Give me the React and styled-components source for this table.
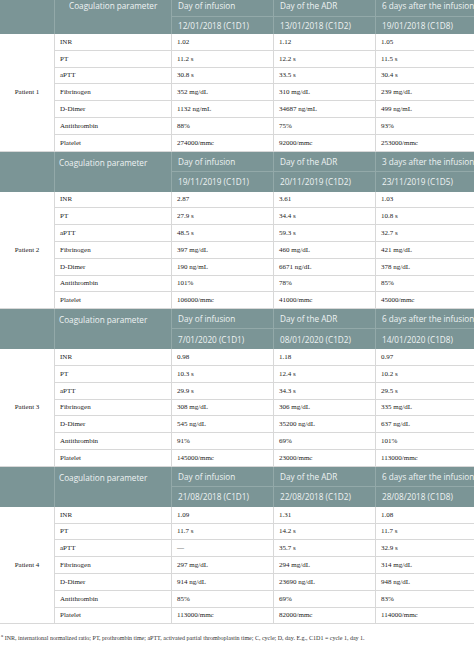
import React from "react";
import styled, { createGlobalStyle } from "styled-components";

const GlobalStyle = createGlobalStyle`
  html, body {
    margin: 0;
    padding: 0;
    background: #ffffff;
    overflow: hidden;
  }
`;

const Page = styled.div`
  width: 478px;
`;

const Block = styled.div`
  display: grid;
  grid-template-columns: 55px 117px 102px 102px 102px;
  grid-template-rows: ${({ $first }) => ($first ? "17px 17px" : "20px 20px")} repeat(7, 16.8px);
`;

const HeadCell = styled.div`
  box-sizing: border-box;
  background: #7b9596;
  color: #eef3f3;
  font-family: "Open Sans", "Liberation Sans", sans-serif;
  font-size: 8.2px;
  line-height: 11px;
  white-space: nowrap;
  overflow: hidden;
  display: flex;
  align-items: ${({ $first }) => ($first ? "flex-start" : "center")};
  padding-left: 6px;
  border-right: 1px solid #93a9a9;
  border-bottom: ${({ $top }) => ($top ? "1px solid #93a9a9" : "none")};
`;

const Corner = styled(HeadCell)`
  grid-row: span 2;
`;

const ParamHead = styled(HeadCell)`
  grid-row: span 2;
  align-items: flex-start;
  padding-top: ${({ $first }) => ($first ? 0 : 5)}px;
  padding-left: ${({ $indent }) => $indent}px;
`;

const Cell = styled.div`
  box-sizing: border-box;
  font-family: "Liberation Serif", "Times New Roman", serif;
  font-size: 7px;
  color: #222222;
  white-space: nowrap;
  display: flex;
  align-items: center;
  padding-left: 5px;
  border-right: 1px solid #d8d8d8;
  border-bottom: 1px solid #d8d8d8;
`;

const PatientCell = styled(Cell)`
  grid-row: span 7;
  justify-content: center;
  padding-left: 0;
`;

const Footnote = styled.p`
  margin: 9px 0 0 1px;
  font-family: "Liberation Serif", "Times New Roman", serif;
  font-size: 6px;
  color: #333333;
  white-space: nowrap;
`;

const params = ["INR", "PT", "aPTT", "Fibrinogen", "D-Dimer", "Antithrombin", "Platelet"];

const blocks = [
  {
    patient: "Patient 1",
    indent: 14,
    titles: ["Day of infusion", "Day of the ADR", "6 days after the infusion"],
    dates: ["12/01/2018 (C1D1)", "13/01/2018 (C1D2)", "19/01/2018 (C1D8)"],
    rows: [
      ["1.02", "1.12", "1.05"],
      ["11.2 s", "12.2 s", "11.5 s"],
      ["30.8 s", "33.5 s", "30.4 s"],
      ["352 mg/dL", "310 mg/dL", "239 mg/dL"],
      ["1132 ng/mL", "34687 ng/mL", "499 ng/mL"],
      ["88%", "75%", "93%"],
      ["274000/mmc", "92000/mmc", "253000/mmc"],
    ],
  },
  {
    patient: "Patient 2",
    indent: 4,
    titles: ["Day of infusion", "Day of the ADR", "3 days after the infusion"],
    dates: ["19/11/2019 (C1D1)", "20/11/2019 (C1D2)", "23/11/2019 (C1D5)"],
    rows: [
      ["2.87", "3.61", "1.03"],
      ["27.9 s", "34.4 s", "10.8 s"],
      ["48.5 s", "59.3 s", "32.7 s"],
      ["397 mg/dL", "460 mg/dL", "421 mg/dL"],
      ["190 ng/mL", "6671 ng/dL", "378 ng/dL"],
      ["101%", "78%", "85%"],
      ["106000/mmc", "41000/mmc", "45000/mmc"],
    ],
  },
  {
    patient: "Patient 3",
    indent: 4,
    titles: ["Day of infusion", "Day of the ADR", "6 days after the infusion"],
    dates: ["7/01/2020 (C1D1)", "08/01/2020 (C1D2)", "14/01/2020 (C1D8)"],
    rows: [
      ["0.98", "1.18", "0.97"],
      ["10.3 s", "12.4 s", "10.2 s"],
      ["29.9 s", "34.3 s", "29.5 s"],
      ["308 mg/dL", "306 mg/dL", "335 mg/dL"],
      ["545 ng/dL", "35200 ng/dL", "637 ng/dL"],
      ["91%", "69%", "101%"],
      ["145000/mmc", "23000/mmc", "113000/mmc"],
    ],
  },
  {
    patient: "Patient 4",
    indent: 4,
    titles: ["Day of infusion", "Day of the ADR", "6 days after the infusion"],
    dates: ["21/08/2018 (C1D1)", "22/08/2018 (C1D2)", "28/08/2018 (C1D8)"],
    rows: [
      ["1.09", "1.31", "1.08"],
      ["11.7 s", "14.2 s", "11.7 s"],
      ["—", "35.7 s", "32.9 s"],
      ["297 mg/dL", "294 mg/dL", "314 mg/dL"],
      ["914 ng/dL", "23690 ng/dL", "948 ng/dL"],
      ["85%", "69%", "83%"],
      ["113000/mmc", "82000/mmc", "114000/mmc"],
    ],
  },
];

const PatientBlock = ({ block, first }) => (
  <Block $first={first}>
    <Corner />
    <ParamHead $indent={block.indent} $first={first}>
      Coagulation parameter
    </ParamHead>
    {block.titles.map((t) => (
      <HeadCell key={t} $top $first={first}>
        {t}
      </HeadCell>
    ))}
    {block.dates.map((d) => (
      <HeadCell key={d}>{d}</HeadCell>
    ))}
    <PatientCell>{block.patient}</PatientCell>
    {block.rows.map((row, i) => (
      <React.Fragment key={params[i]}>
        <Cell>{params[i]}</Cell>
        {row.map((v, j) => (
          <Cell key={j}>{v}</Cell>
        ))}
      </React.Fragment>
    ))}
  </Block>
);

const App = () => (
  <>
    <GlobalStyle />
    <Page>
      {blocks.map((b, i) => (
        <PatientBlock key={b.patient} block={b} first={i === 0} />
      ))}
      <Footnote>
        <sup>a</sup> INR, international normalized ratio; PT, prothrombin time; aPTT, activated partial
        thromboplastin time; C, cycle; D, day. E.g., C1D1 = cycle 1, day 1.
      </Footnote>
    </Page>
  </>
);

export default App;
